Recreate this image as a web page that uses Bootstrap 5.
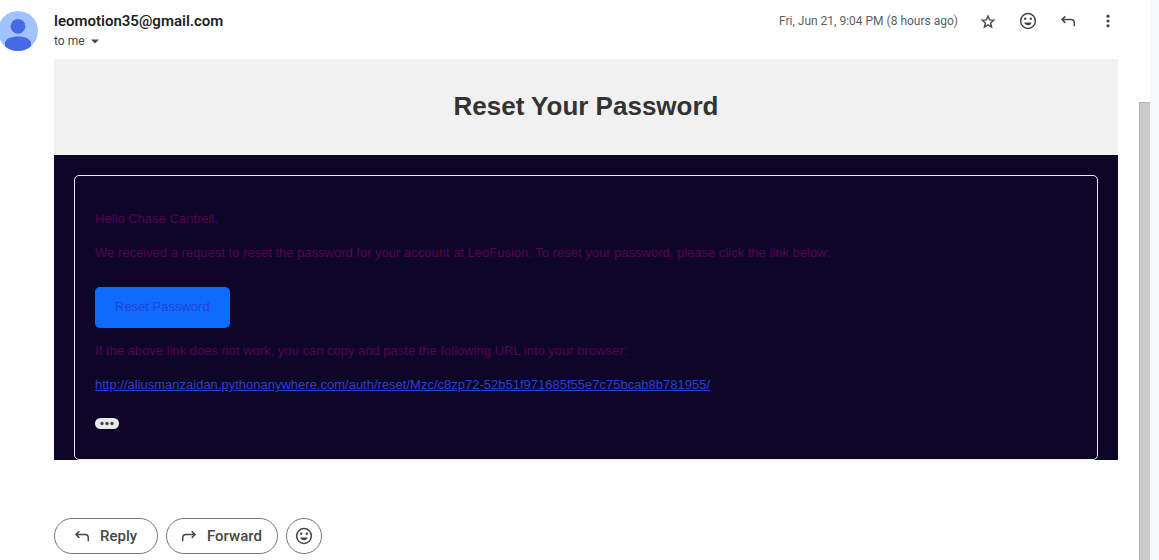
<!DOCTYPE html>
<html lang="en">
<head>
<meta charset="utf-8">
<meta name="viewport" content="width=device-width, initial-scale=1">
<title>Reset Your Password</title>
<link href="https://cdn.jsdelivr.net/npm/bootstrap@5.3.0/dist/css/bootstrap.min.css" rel="stylesheet">
<script src="https://cdn.jsdelivr.net/npm/bootstrap@5.3.0/dist/js/bootstrap.bundle.min.js" defer></script>
<style>
  body { font-family: Roboto, "Liberation Sans", sans-serif; color: #444746; background: #fff; overflow: hidden; }
  svg { display: block; fill: currentColor; }
  .mail-head { padding: 11px 0 8px; }
  .avatar { width: 40px; height: 40px; margin: 0 16px 0 -2px; }
  .sender { font-size: 15px; line-height: 20px; font-weight: 600; color: #1f1f1f; }
  .to-line { font-size: 12px; line-height: 20px; color: #5e5e5e; }
  .date { font-size: 12px; line-height: 20px; color: #5e5e5e; margin-right: 20px; }
  .icon-row { gap: 20px; }
  .bare { border: 0; background: none; padding: 0; color: #444746; }
  .mail-main { padding-right: 21px; }
  .mail-content { margin-left: 54px; }
  .letter { font: 13px/20px "Liberation Sans", Arial, sans-serif; background: #0d0628; }
  .banner { background: #f1f1f1; padding: 31px 0 33px; }
  .banner h1 { font-size: 26px; line-height: 32px; color: #333; }
  .letter-pad { padding: 20px 20px 0; }
  .panel { border: 1px solid #ececf2; border-radius: 5px; padding: 33px 20px 30px; color: #580054; }
  .panel p { margin-bottom: 14px; }
  .reset-link { display: inline-block; background: #0f6bff; color: #2443d2; border-radius: 5px; padding: 10px 20px 11px; margin: 10px 0 13px; text-decoration: none; }
  .url-link { color: #2443d2; }
  .trim { display: block; width: 24px; height: 11px; border-radius: 6px; background: #e8eaed; margin-top: 23px; }
  .replies { margin-top: 58px; gap: 8px; }
  .pill { height: 36px; border: 1px solid #747775; border-radius: 18px; background: #fff; color: #444746; font-size: 15px; font-weight: 500; line-height: 20px; padding: 0; }
  .pill-reply { width: 104px; padding-left: 17px; }
  .pill-forward { width: 112px; padding-left: 12px; }
  .pill-round { width: 36px; }
  .rail { width: 11px; padding-top: 102px; }
  .thumb { background: #cbcbcb; border: solid #b3b3b3; border-width: 1px 0 0 1px; }
  .side { width: 9px; background: #f6f8fc; }
</style>
</head>
<body>
<svg class="d-none" aria-hidden="true">
  <symbol id="i-reply" viewBox="0 0 20 20"><path d="M7.300 5.300 4 8.600l3.300 3.300M4.200 8.600h8.800a3.300 3.300 0 0 1 3.300 3.300v3.400" fill="none" stroke="currentColor" stroke-width="1.500"/></symbol>
  <symbol id="i-forward" viewBox="0 0 20 20"><path d="m12.700 5.300 3.300 3.300-3.300 3.300M15.800 8.600H7a3.300 3.300 0 0 0-3.300 3.300v3.400" fill="none" stroke="currentColor" stroke-width="1.500"/></symbol>
  <symbol id="i-smile" viewBox="0 0 20 20"><circle cx="10" cy="10" r="7.400" fill="none" stroke="currentColor" stroke-width="1.500"/><circle cx="7.200" cy="7.800" r="1.200"/><circle cx="12.800" cy="7.800" r="1.200"/><path d="M6.200 11.500h7.600a4 4 0 0 1-7.600 0z"/></symbol>
</svg>
<div class="d-flex vh-100">
  <main class="mail-main flex-grow-1">
    <header class="mail-head d-flex">
      <svg class="avatar flex-shrink-0" viewBox="0 0 40 40" role="img" aria-label="Sender">
        <clipPath id="disc"><circle cx="20" cy="20" r="20"/></clipPath>
        <g clip-path="url(#disc)"><path fill="#a0c2ff" d="M0 0h40v40H0z"/><circle cx="20" cy="15.3" r="7.4" fill="#4769e6"/><path fill="#4769e6" d="M7 40v-8c0-4 6-6.600 13-6.600S33 28 33 32v8z"/></g>
      </svg>
      <div class="flex-grow-1">
        <div class="d-flex align-items-center">
          <span class="sender me-auto">leomotion35@gmail.com</span>
          <span class="date">Fri, Jun 21, 9:04 PM (8 hours ago)</span>
          <div class="icon-row d-flex">
            <button class="bare" aria-label="Star"><svg width="20" height="20" viewBox="0 0 20 20"><path d="m10 5 1.600 3.900 4.200.3-3.200 2.800 1 4.100-3.600-2.200-3.600 2.200 1-4.100-3.200-2.800 4.200-.3z" fill="none" stroke="currentColor" stroke-width="1.400"/></svg></button>
            <button class="bare" aria-label="Add reaction"><svg width="20" height="20"><use href="#i-smile"/></svg></button>
            <button class="bare" aria-label="Reply"><svg width="20" height="20"><use href="#i-reply"/></svg></button>
            <button class="bare" aria-label="More"><svg width="20" height="20" viewBox="0 0 20 20"><circle cx="10" cy="5.200" r="1.600"/><circle cx="10" cy="10" r="1.600"/><circle cx="10" cy="14.800" r="1.600"/></svg></button>
          </div>
        </div>
        <button class="bare to-line d-flex align-items-center">to me <svg class="ms-1" width="12" height="12" viewBox="0 0 12 12"><path d="M2 4.500h8L6 8.500z"/></svg></button>
      </div>
    </header>
    <div class="mail-content">
      <article class="letter">
        <div class="banner text-center"><h1 class="m-0 fw-bold">Reset Your Password</h1></div>
        <div class="letter-pad">
          <div class="panel">
            <p>Hello Chase Cantrell,</p>
            <p>We received a request to reset the password for your account at LeoFusion. To reset your password, please click the link below:</p>
            <a class="reset-link" href="#">Reset Password</a>
            <p>If the above link does not work, you can copy and paste the following URL into your browser:</p>
            <p><a class="url-link" href="#">http://aliusmanzaidan.pythonanywhere.com/auth/reset/Mzc/c8zp72-52b51f971685f55e7c75bcab8b781955/</a></p>
            <button class="bare trim" aria-label="Show trimmed content"><svg width="24" height="11" viewBox="0 0 24 11"><circle cx="7" cy="5.500" r="1.700"/><circle cx="12" cy="5.500" r="1.700"/><circle cx="17" cy="5.500" r="1.700"/></svg></button>
          </div>
        </div>
      </article>
      <div class="replies d-flex">
        <button class="pill pill-reply d-flex align-items-center gap-2"><svg width="20" height="20"><use href="#i-reply"/></svg>Reply</button>
        <button class="pill pill-forward d-flex align-items-center gap-2"><svg width="20" height="20"><use href="#i-forward"/></svg>Forward</button>
        <button class="pill pill-round d-flex align-items-center justify-content-center" aria-label="Add reaction"><svg width="20" height="20"><use href="#i-smile"/></svg></button>
      </div>
    </div>
  </main>
  <div class="rail d-flex flex-column flex-shrink-0"><div class="thumb flex-grow-1"></div></div>
  <aside class="side flex-shrink-0"></aside>
</div>
</body>
</html>
